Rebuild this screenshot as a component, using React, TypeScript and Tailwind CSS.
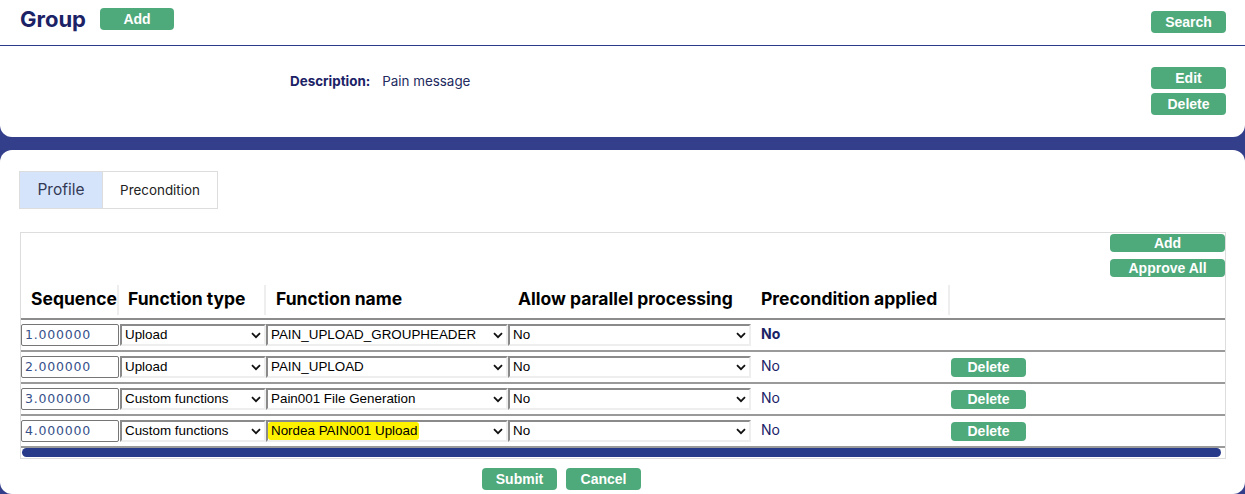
import React from 'react'

const Btn = ({ label, className = '' }: { label: string; className?: string }) => (
  <button
    className={`bg-[#4ea97b] text-white font-bold text-[14px] rounded-[4px] flex items-center justify-center leading-none ${className}`}
    style={{ fontFamily: '"Liberation Sans", Arial, sans-serif' }}
  >
    {label}
  </button>
)

const Chevron = () => (
  <svg width="10" height="7" viewBox="0 0 10 7" className="shrink-0">
    <path d="M1 1.2 L5 5.2 L9 1.2" fill="none" stroke="#111" strokeWidth="1.8" />
  </svg>
)

const FakeSelect = ({ value, width, highlight = false }: { value: string; width: string; highlight?: boolean }) => (
  <div
    className={`${width} h-[22px] bg-white flex items-center justify-between pr-[3px] border-2 border-t-[#8a8a8a] border-l-[#8a8a8a] border-r-[#eeeeee] border-b-[#eeeeee] text-[13.4px] text-black`}
    style={{ fontFamily: '"Liberation Sans", Arial, sans-serif' }}
  >
    <span className={`pl-[3px] h-full flex items-center ${highlight ? 'bg-[#fff200] rounded-[3px] pr-[2px]' : ''}`}>{value}</span>
    <Chevron />
  </div>
)

const rows = [
  { seq: '1.000000', type: 'Upload', name: 'PAIN_UPLOAD_GROUPHEADER', bold: true, del: false, hl: false },
  { seq: '2.000000', type: 'Upload', name: 'PAIN_UPLOAD', bold: false, del: true, hl: false },
  { seq: '3.000000', type: 'Custom functions', name: 'Pain001 File Generation', bold: false, del: true, hl: false },
  { seq: '4.000000', type: 'Custom functions', name: 'Nordea PAIN001 Upload', bold: false, del: true, hl: true },
]

export default function App() {
  const inter = { fontFamily: 'Inter, "Liberation Sans", Arial, sans-serif' }
  return (
    <div className="w-[1245px] h-[494px] bg-[#343f8b] flex flex-col gap-[13px] overflow-hidden" style={inter}>
      {/* Top card */}
      <div className="bg-white rounded-b-[12px] h-[137px] shrink-0 flex flex-col">
        <div className="h-[46px] border-b border-[#2d3a8c] flex items-start justify-between pl-[20px] pr-[19px]">
          <div className="flex items-center gap-[14px] pt-[8px]">
            <span className="text-[22px] font-bold text-[#1b2266] leading-[22px]">Group</span>
            <Btn label="Add" className="w-[74px] h-[22px]" />
          </div>
          <Btn label="Search" className="w-[75px] h-[22px] mt-[11px]" />
        </div>
        <div className="flex justify-between pr-[19px] pt-[21px]">
          <div className="pl-[290px] pt-[4px] text-[13.4px] text-[#1b2266] flex gap-[12px]">
            <span className="font-bold">Description:</span>
            <span className="text-[#222a5e]">Pain message</span>
          </div>
          <div className="flex flex-col gap-[4px]">
            <Btn label="Edit" className="w-[75px] h-[22px]" />
            <Btn label="Delete" className="w-[75px] h-[22px]" />
          </div>
        </div>
      </div>

      {/* Bottom card */}
      <div className="bg-white rounded-[12px] flex-1 flex flex-col pt-[21px]">
        <div className="flex ml-[19px] h-[38px] w-fit border border-[#dddddd]">
          <div className="w-[82px] bg-[#d6e4fb] flex items-center justify-center text-[15.5px] text-[#333a55]">Profile</div>
          <div className="w-[115px] border-l border-[#dddddd] flex items-center justify-center text-[13.4px] text-[#222]">Precondition</div>
        </div>

        <div className="mt-[23px] ml-[20px] w-[1206px] h-[227px] border border-[#dddddd] flex flex-col">
          <div className="flex flex-col items-end pt-[1px] gap-[7px]">
            <Btn label="Add" className="w-[115px] h-[18px]" />
            <Btn label="Approve All" className="w-[115px] h-[18px]" />
          </div>
          {/* Header */}
          <div className="flex h-[43px] pt-[4px] border-b-2 border-[#8c8c8c] text-[17.5px] font-bold text-black items-center">
            <div className="w-[98px] pl-[10px] border-r-2 border-[#eeeeee] h-[30px] flex items-center">Sequence</div>
            <div className="w-[147px] pl-[9px] border-r-2 border-[#eeeeee] h-[30px] flex items-center">Function type</div>
            <div className="w-[242px] pl-[10px] h-[30px] flex items-center">Function name</div>
            <div className="w-[243px] pl-[10px] h-[30px] flex items-center">Allow parallel processing</div>
            <div className="w-[199px] pl-[10px] border-r-2 border-[#eeeeee] h-[30px] flex items-center">Precondition applied</div>
            <div className="flex-1" />
          </div>
          {rows.map((r) => (
            <div key={r.seq} className="flex h-[32px] border-b-2 border-[#9a9a9a] items-center">
              <div className="w-[99px]">
                <div
                  className="w-[98px] h-[22px] border border-[#767676] rounded-[2px] flex items-center pl-[3px] text-[12.5px] tracking-[0.8px] text-[#36508a]"
                  style={{ fontFamily: '"DejaVu Sans", Verdana, sans-serif' }}
                >
                  {r.seq}
                </div>
              </div>
              <FakeSelect value={r.type} width="w-[146px]" />
              <FakeSelect value={r.name} width="w-[242px]" highlight={r.hl} />
              <FakeSelect value="No" width="w-[243px]" />
              <div className={`w-[200px] pl-[10px] text-[14px] text-[#1b2266] self-start pt-[3px] ${r.bold ? 'font-bold' : ''}`}>No</div>
              <div className="flex-1">
                {r.del && <Btn label="Delete" className="w-[75px] h-[19px]" />}
              </div>
            </div>
          ))}
          <div className="ml-[1px] mr-[4px] h-[9px] rounded-full bg-[#283a8a]" />
        </div>

        <div className="flex gap-[9px] mt-[9px] pl-[482px]">
          <Btn label="Submit" className="w-[75px] h-[22px]" />
          <Btn label="Cancel" className="w-[75px] h-[22px]" />
        </div>
      </div>
    </div>
  )
}
